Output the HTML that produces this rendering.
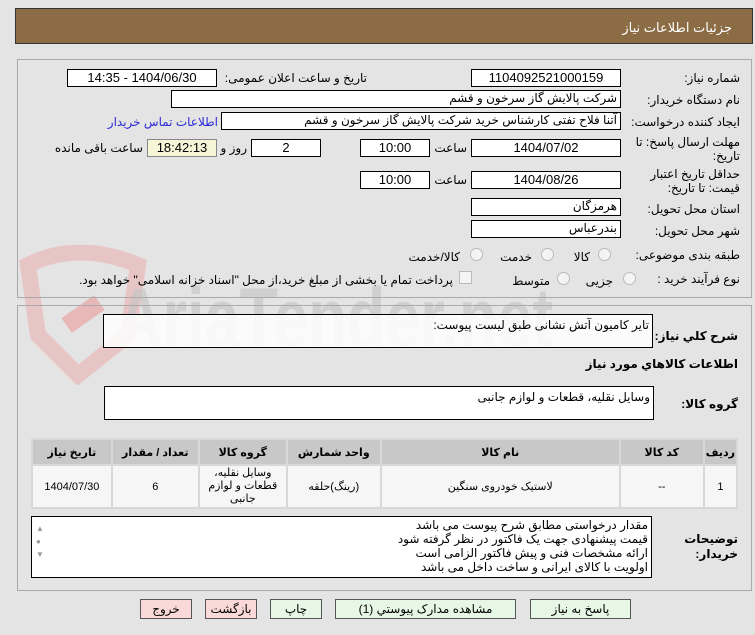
<!DOCTYPE html>
<html><head><meta charset="utf-8">
<style>
body{margin:0;width:755px;height:635px;background:#e4e4e4;font-family:"Liberation Sans","DejaVu Sans",sans-serif;font-size:12px;color:#000;position:relative;overflow:hidden}
.a{position:absolute}
.hdr{left:15px;top:8px;width:736px;height:34px;background:#8b6c45;border:1px solid #333;}
.hdr span{position:absolute;right:20px;top:11px;color:#fff;font-size:13px}
.pnl{border:1px solid #aaa;background:#e4e4e4}
.box{position:absolute;background:#fff;border:1px solid #000;direction:rtl;padding:0 3px;box-sizing:border-box;line-height:15px;white-space:nowrap;overflow:hidden}
.c{text-align:center;font-size:13px}
.l{position:absolute;direction:rtl;white-space:nowrap;text-align:right}
.w{white-space:normal}
.rad{position:absolute;width:11px;height:11px;border-radius:50%;border:1px solid #bbb;background:#f4f4f4}
table{border-collapse:separate;border-spacing:2px;background:#d8d8d8}
th{background:#c8c8c8;font-weight:bold;height:22px;font-size:11px}
td{background:#f6f6f6;text-align:center;font-size:11px}
.btn{position:absolute;top:599px;height:18px;border:1px solid #555;background:#e6f7e6;text-align:center;line-height:18px;font-size:12px;direction:rtl}
</style></head><body>
<div class="a hdr"><span>جزئیات اطلاعات نیاز</span></div>

<svg class="a" style="left:18px;top:245px" width="560" height="140">
<path d="M10 20 Q60 -5 120 20 L110 90 L60 130 L20 90 Z" fill="none" stroke="#e8b8b8" stroke-width="16" opacity="0.7"/>
<rect x="45" y="60" width="40" height="18" fill="#e8b8b8" transform="rotate(-35 65 69)"/>
<text x="110" y="85" font-size="70" font-family="Liberation Sans" font-weight="bold" fill="#c4c4c4" opacity="0.6" transform="scale(0.9,1.2)">AriaTender.net</text>
</svg>

<div class="a pnl" style="left:17px;top:59px;width:733px;height:237px;background:transparent"></div>
<div class="a pnl" style="left:17px;top:305px;width:733px;height:284px;background:transparent"></div>

<div class="l" style="right:15px;top:71px">شماره نیاز:</div>
<div class="box c" style="left:471px;top:69px;width:150px;height:18px">1104092521000159</div>
<div class="l" style="right:388px;top:71px">تاریخ و ساعت اعلان عمومی:</div>
<div class="box c" style="left:67px;top:69px;width:150px;height:18px">1404/06/30 - 14:35</div>

<div class="l" style="right:15px;top:93px">نام دستگاه خریدار:</div>
<div class="box" style="left:171px;top:90px;width:450px;height:18px">شرکت پالایش گاز سرخون و قشم</div>

<div class="l" style="right:15px;top:115px">ایجاد کننده درخواست:</div>
<div class="box" style="left:221px;top:112px;width:400px;height:18px">آتنا فلاح تفتی کارشناس خرید شرکت پالایش گاز سرخون و قشم</div>
<div class="l" style="right:537px;top:115px;color:#2a2ad8">اطلاعات تماس خریدار</div>

<div class="l w" style="right:15px;top:135px;width:110px;line-height:14px">مهلت ارسال پاسخ: تا تاریخ:</div>
<div class="box c" style="left:471px;top:139px;width:150px;height:18px">1404/07/02</div>
<div class="l" style="right:288px;top:141px">ساعت</div>
<div class="box c" style="left:360px;top:139px;width:70px;height:18px">10:00</div>
<div class="box c" style="left:251px;top:139px;width:70px;height:18px">2</div>
<div class="l" style="right:508px;top:141px">روز و</div>
<div class="box c" style="left:147px;top:139px;width:70px;height:18px;background:#f5f5d8;border-color:#888">18:42:13</div>
<div class="l" style="right:612px;top:141px">ساعت باقی مانده</div>

<div class="l w" style="right:15px;top:167px;width:100px;line-height:14px">حداقل تاریخ اعتبار قیمت: تا تاریخ:</div>
<div class="box c" style="left:471px;top:171px;width:150px;height:18px">1404/08/26</div>
<div class="l" style="right:288px;top:173px">ساعت</div>
<div class="box c" style="left:360px;top:171px;width:70px;height:18px">10:00</div>

<div class="l" style="right:15px;top:202px">استان محل تحویل:</div>
<div class="box" style="left:471px;top:198px;width:150px;height:18px">هرمزگان</div>
<div class="l" style="right:15px;top:224px">شهر محل تحویل:</div>
<div class="box" style="left:471px;top:220px;width:150px;height:18px">بندرعباس</div>

<div class="l" style="right:15px;top:248px">طبقه بندی موضوعی:</div>
<div class="rad" style="left:598px;top:248px"></div><div class="l" style="right:165px;top:250px">کالا</div>
<div class="rad" style="left:541px;top:248px"></div><div class="l" style="right:223px;top:250px">خدمت</div>
<div class="rad" style="left:470px;top:248px"></div><div class="l" style="right:295px;top:250px">کالا/خدمت</div>

<div class="l" style="right:15px;top:272px">نوع فرآیند خرید :</div>
<div class="rad" style="left:623px;top:272px"></div><div class="l" style="right:142px;top:274px">جزیی</div>
<div class="rad" style="left:557px;top:272px"></div><div class="l" style="right:205px;top:274px">متوسط</div>
<div class="a" style="left:459px;top:271px;width:11px;height:11px;border:1px solid #bbb;background:#f4f4f4"></div>
<div class="l" style="right:302px;top:273px">پرداخت تمام یا بخشی از مبلغ خرید،از محل "اسناد خزانه اسلامی" خواهد بود.</div>

<div class="l" style="right:17px;top:329px;font-weight:bold;font-size:12px">شرح کلي نياز:</div>
<div class="box" style="left:103px;top:314px;width:550px;height:34px;background:rgba(255,255,255,0.85);padding-top:3px">تایر کامیون آتش نشانی طبق لیست پیوست:</div>
<div class="l" style="right:17px;top:357px;font-weight:bold;font-size:12px">اطلاعات کالاهاي مورد نياز</div>
<div class="l" style="right:17px;top:397px;font-weight:bold;font-size:12px">گروه کالا:</div>
<div class="box" style="left:104px;top:386px;width:550px;height:34px;padding-top:3px">وسایل نقلیه، قطعات و لوازم جانبی</div>

<table class="a" style="left:31px;top:438px;width:707px;direction:rtl">
<tr><th style="width:26px">ردیف</th><th style="width:80px">کد کالا</th><th style="width:235px">نام کالا</th><th style="width:90px">واحد شمارش</th><th style="width:84px">گروه کالا</th><th style="width:83px">تعداد / مقدار</th><th>تاریخ نیاز</th></tr>
<tr style="height:41px"><td>1</td><td>--</td><td>لاستیک خودروی سنگین</td><td>(رینگ)حلقه</td><td style="line-height:13px">وسایل نقلیه، قطعات و لوازم جانبی</td><td>6</td><td>1404/07/30</td></tr>
</table>

<div class="l w" style="right:17px;top:532px;font-weight:bold;font-size:12px;line-height:15px;width:58px">توضیحات خریدار:</div>
<div class="box" style="left:31px;top:516px;width:621px;height:62px;line-height:14px;padding-top:1px">مقدار درخواستی مطابق شرح پیوست می باشد<br>قیمت پیشنهادی جهت یک فاکتور در نظر گرفته شود<br>ارائه مشخصات فنی و پیش فاکتور الزامی است<br>اولویت با کالای ایرانی و ساخت داخل می باشد</div>
<div class="a" style="left:36px;top:522px;color:#999;font-size:8px;line-height:13px">▲<br>●<br>▼</div>

<div class="btn" style="left:140px;width:50px;background:#fbd9d9">خروج</div>
<div class="btn" style="left:205px;width:50px;background:#fbd9d9">بازگشت</div>
<div class="btn" style="left:270px;width:50px">چاپ</div>
<div class="btn" style="left:335px;width:179px">مشاهده مدارک پیوستي (1)</div>
<div class="btn" style="left:530px;width:99px">پاسخ به نياز</div>
</body></html>
